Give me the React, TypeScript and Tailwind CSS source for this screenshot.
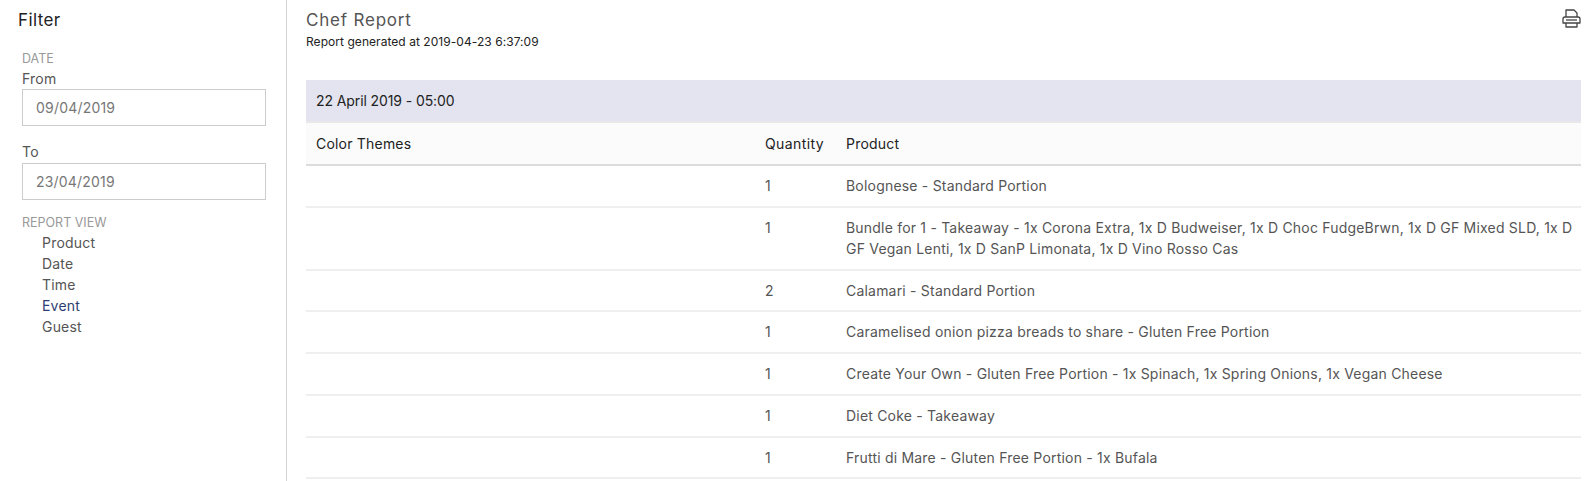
const items: [string, string][] = [
  ["1", "Bolognese - Standard Portion"],
  ["1", "Bundle for 1 - Takeaway - 1x Corona Extra, 1x D Budweiser, 1x D Choc FudgeBrwn, 1x D GF Mixed SLD, 1x D GF Vegan Lenti, 1x D SanP Limonata, 1x D Vino Rosso Cas"],
  ["2", "Calamari - Standard Portion"],
  ["1", "Caramelised onion pizza breads to share - Gluten Free Portion"],
  ["1", "Create Your Own - Gluten Free Portion - 1x Spinach, 1x Spring Onions, 1x Vegan Cheese"],
  ["1", "Diet Coke - Takeaway"],
  ["1", "Frutti di Mare - Gluten Free Portion - 1x Bufala"],
];

function PrinterIcon() {
  return (
    <svg width="19" height="19" viewBox="0 0 19 19" fill="none" stroke="#444" strokeWidth="1.3" strokeLinejoin="round" className="block">
      <path d="M4 8V1h8l3 3v4" />
      <path d="M1 14V10a2 2 0 0 1 2-2h13a2 2 0 0 1 2 2v4H1z" />
      <path d="M4 14v4h11v-4" />
      <path d="M4 11h11" />
    </svg>
  );
}

export default function App() {
  return (
    <div className="flex h-[481px] overflow-hidden bg-white font-['Inter',sans-serif] text-[14px] leading-[21px] tracking-[0.2px] text-[#555]">
      <aside className="w-[287px] shrink-0 border-r border-[#d4d4d4] pl-[18px] pr-[20px] pt-[9px]">
        <h2 className="text-[17px] leading-[22px] tracking-[0.4px] text-[#222]">Filter</h2>
        <div className="pl-[4px]">
          <div className="mt-[20px] text-[12.5px] leading-[16px] tracking-normal text-[#999]">DATE</div>
          <div className="mt-[2px] leading-[20px] text-[#555]">From</div>
          <div className="flex h-[37px] items-center border border-[#ccc] pl-[13px] text-[#777]">09/04/2019</div>
          <div className="mt-[16px] leading-[20px] text-[#555]">To</div>
          <div className="mt-[1px] flex h-[37px] items-center border border-[#ccc] pl-[13px] text-[#777]">23/04/2019</div>
          <div className="mt-[15px] text-[12.5px] leading-[16px] tracking-normal text-[#999]">REPORT VIEW</div>
          <ul className="mt-[1px] pl-[20px]">
            <li>Product</li>
            <li>Date</li>
            <li>Time</li>
            <li className="text-[#2c3e73]">Event</li>
            <li>Guest</li>
          </ul>
        </div>
      </aside>
      <main className="min-w-0 flex-1 pl-[19px] pr-[14px]">
        <div className="flex items-start justify-between pt-[9px]">
          <div>
            <h1 className="text-[17px] leading-[22px] tracking-[0.8px] text-[#555]">Chef Report</h1>
            <p className="mt-[2px] text-[12px] leading-[18px] tracking-[0.05px] text-[#222]">Report generated at 2019-04-23 6:37:09</p>
          </div>
          <PrinterIcon />
        </div>
        <div className="mt-[29px] flex h-[43px] items-center border-b-2 border-[#e8e8e8] bg-[#e3e4f0] pl-[10px] tracking-[-0.1px] text-[#222]">22 April 2019 - 05:00</div>
        <div className="grid grid-cols-[449px_81px_1fr] border-b-2 border-[#dcdcdc] bg-[#fbfbfb] text-[#222]">
          <div className="pb-[10px] pl-[10px] pt-[10px]">Color Themes</div>
          <div className="pb-[10px] pl-[10px] pt-[10px] tracking-[0.4px]">Quantity</div>
          <div className="pb-[10px] pl-[10px] pt-[10px]">Product</div>
        </div>
        {items.map(([q, p], i) => (
          <div key={i} className="grid grid-cols-[449px_81px_1fr] border-b-2 border-[#efefef] leading-[20.9px]">
            <div className="pb-[8.9px] pl-[10px] pt-[10px]" />
            <div className="pb-[8.9px] pl-[10px] pt-[10px]">{q}</div>
            <div className="pb-[8.9px] pl-[10px] pt-[10px]">{p}</div>
          </div>
        ))}
      </main>
    </div>
  );
}
